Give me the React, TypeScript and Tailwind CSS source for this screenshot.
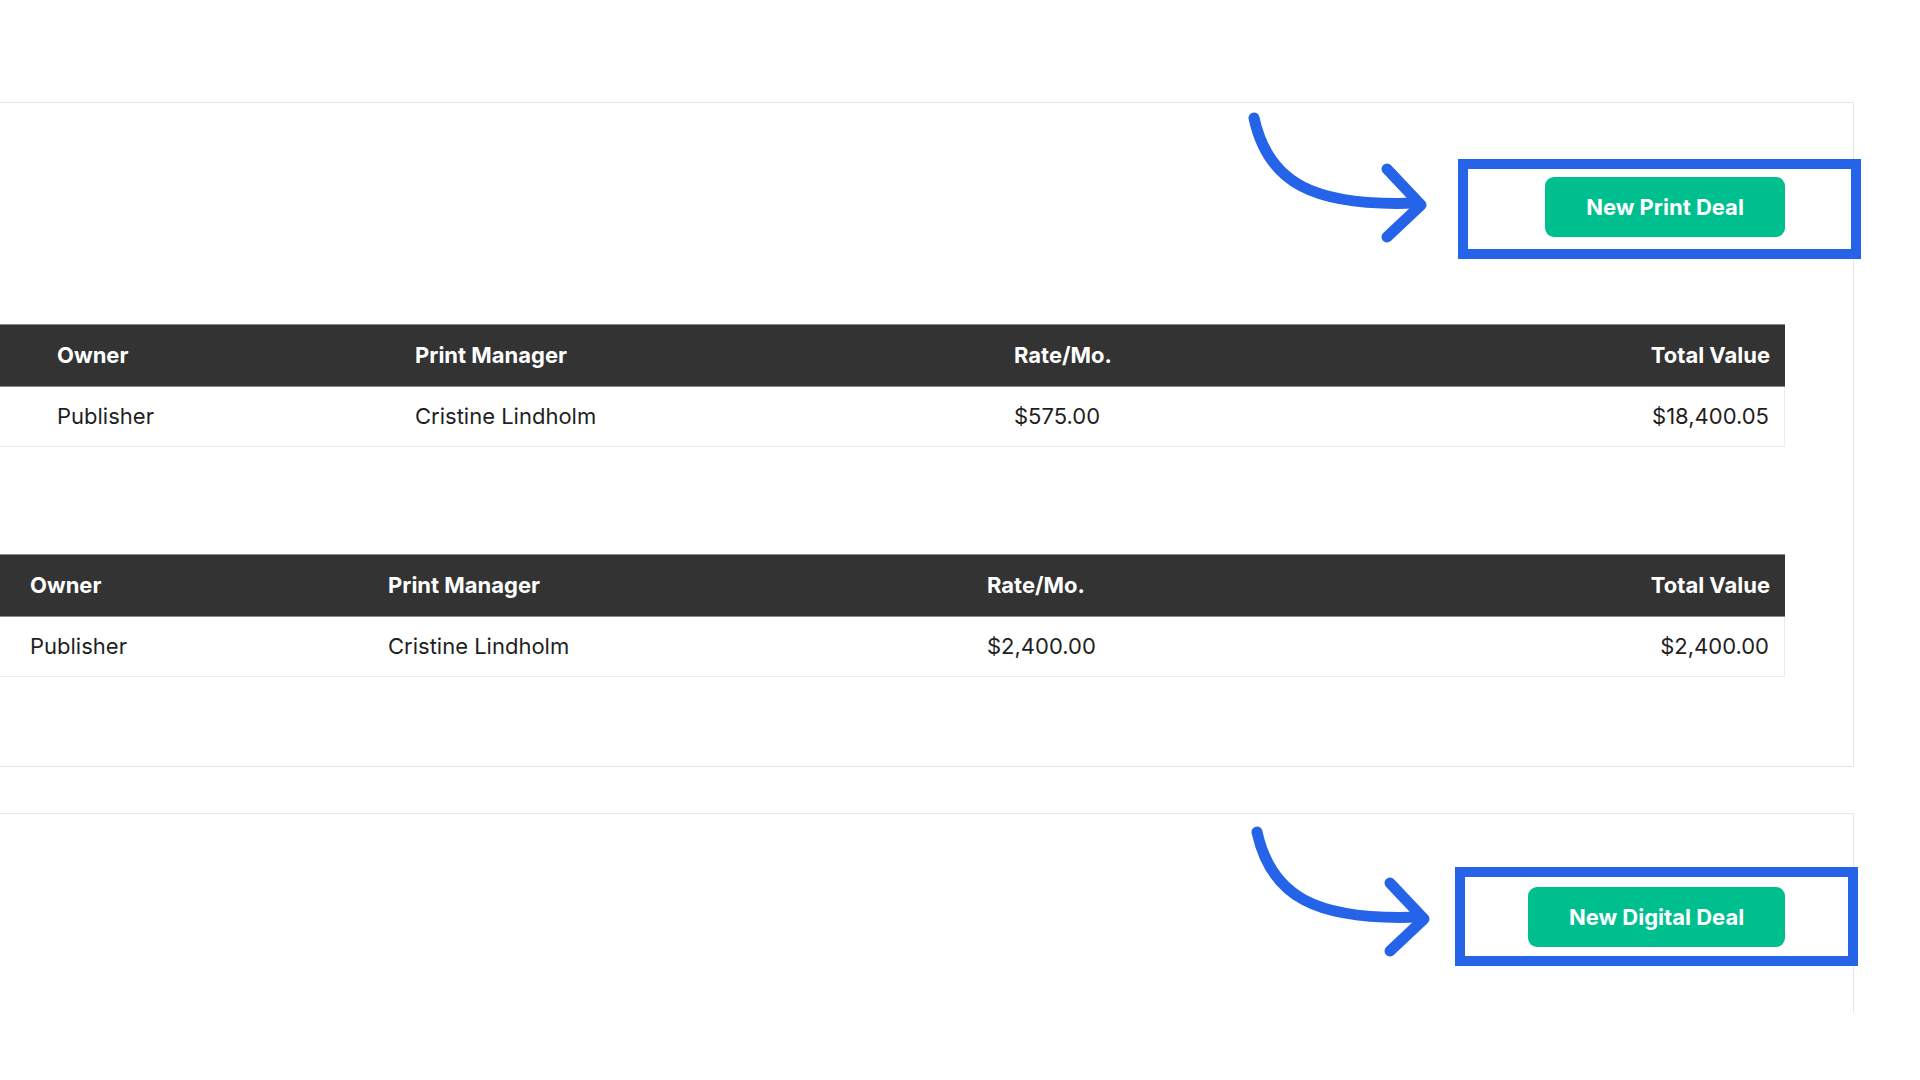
import type { ReactNode } from 'react'

interface DealRow {
  owner: string
  manager: string
  rate: string
  total: string
}

const printDeals: DealRow[] = [
  { owner: 'Publisher', manager: 'Cristine Lindholm', rate: '$575.00', total: '$18,400.05' },
]

const digitalDeals: DealRow[] = [
  { owner: 'Publisher', manager: 'Cristine Lindholm', rate: '$2,400.00', total: '$2,400.00' },
]

// blue annotation frame drawn around a button
function Highlight({ children, frame }: { children: ReactNode; frame: string }) {
  return (
    <div className="relative">
      {children}
      <div className={`pointer-events-none absolute border-[10px] border-[#2563e8] ${frame}`} />
    </div>
  )
}

function DealButton({ label, width }: { label: string; width: string }) {
  return (
    <button className={`h-[60px] ${width} rounded-[9px] bg-[#00bf8f] text-[22px] font-bold text-white`}>
      {label}
    </button>
  )
}

function DealTable({ rows, inset }: { rows: DealRow[]; inset: string }) {
  return (
    <div className="w-full">
      <div className={`grid h-[63px] grid-cols-[358px_599px_1fr_auto] items-center border-y border-[#8a8a8a] bg-[#333333] pr-[15px] text-[22px] font-bold text-white ${inset}`}>
        <div>Owner</div>
        <div>Print Manager</div>
        <div>Rate/Mo.</div>
        <div className="text-right">Total Value</div>
      </div>
      {rows.map((row, i) => (
        <div
          key={i}
          className={`grid h-[60px] grid-cols-[358px_599px_1fr_auto] items-center border-r border-b border-[#ececec] pr-[15px] text-[22px] text-[#1f1f1f] ${inset}`}
        >
          <div>{row.owner}</div>
          <div>{row.manager}</div>
          <div>{row.rate}</div>
          <div className="text-right">{row.total}</div>
        </div>
      ))}
    </div>
  )
}

function Arrow({ dx, dy }: { dx: number; dy: number }) {
  return (
    <g transform={`translate(${dx} ${dy})`}>
      <path d="M1254 118 C1268 182, 1312 207, 1416 203" />
      <path d="M1387 169 L1421 205 L1387 237" />
    </g>
  )
}

export default function App() {
  return (
    <div className="relative h-[1080px] w-[1920px] overflow-hidden bg-white font-['Inter','Liberation_Sans',sans-serif]">
      <div className="pt-[102px]">
        {/* Print deals card */}
        <section className="h-[665px] w-[1854px] border-y border-r border-[#e6e6e6] pt-[74px] pr-[68px]">
          <div className="flex justify-end">
            <Highlight frame="-top-[18px] -right-[76px] -bottom-[22px] -left-[87px]">
              <DealButton label="New Print Deal" width="w-[240px]" />
            </Highlight>
          </div>
          <div className="mt-[87px]">
            <DealTable rows={printDeals} inset="pl-[57px]" />
          </div>
          <div className="mt-[107px]">
            <DealTable rows={digitalDeals} inset="pl-[30px]" />
          </div>
        </section>

        {/* Digital deals card */}
        <section className="mt-[46px] h-[200px] w-[1854px] border-t border-r border-[#e6e6e6] pt-[73px] pr-[68px]">
          <div className="flex justify-end">
            <Highlight frame="-top-[20px] -right-[73px] -bottom-[19px] -left-[73px]">
              <DealButton label="New Digital Deal" width="w-[257px]" />
            </Highlight>
          </div>
        </section>
      </div>

      <svg
        className="pointer-events-none absolute top-0 left-0"
        width="1920"
        height="1080"
        fill="none"
        stroke="#2563e8"
        strokeWidth="11"
        strokeLinecap="round"
        strokeLinejoin="round"
      >
        <Arrow dx={0} dy={0} />
        <Arrow dx={3} dy={714} />
      </svg>
    </div>
  )
}
